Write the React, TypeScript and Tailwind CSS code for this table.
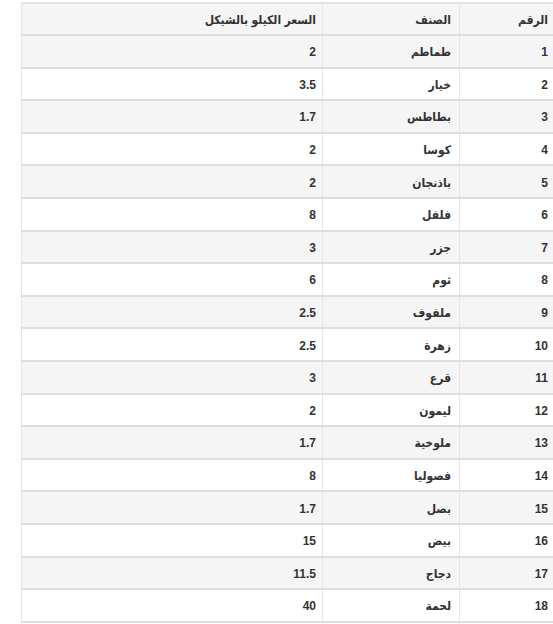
import React from "react";

const rows: [number, string, string][] = [
  [1, "طماطم", "2"],
  [2, "خيار", "3.5"],
  [3, "بطاطس", "1.7"],
  [4, "كوسا", "2"],
  [5, "باذنجان", "2"],
  [6, "فلفل", "8"],
  [7, "جزر", "3"],
  [8, "ثوم", "6"],
  [9, "ملفوف", "2.5"],
  [10, "زهرة", "2.5"],
  [11, "قرع", "3"],
  [12, "ليمون", "2"],
  [13, "ملوخية", "1.7"],
  [14, "فصوليا", "8"],
  [15, "بصل", "1.7"],
  [16, "بيض", "15"],
  [17, "دجاج", "11.5"],
  [18, "لحمة", "40"],
];

export default function App() {
  return (
    <div className="w-[553px] h-[624px] overflow-hidden bg-white pl-[21px] pt-[2px]" style={{ fontFamily: '"Liberation Sans", "DejaVu Sans Condensed", "DejaVu Sans", sans-serif' }}>
      <table dir="rtl" className="w-[535px] table-fixed border-collapse text-[12px] font-bold text-[#333]">
        <colgroup>
          <col className="w-[97px]" />
          <col className="w-[137px]" />
          <col className="w-[301px]" />
        </colgroup>
        <thead>
          <tr className="bg-[#f5f5f5] h-[32px]">
            <th className="border-x border-x-[#e6e6e6] border-t-2 border-t-[#e3e3e3] border-b-2 border-b-[#dedede] px-[8px] pt-[2px] text-right align-middle">الرقم</th>
            <th className="border-x border-x-[#e6e6e6] border-t-2 border-t-[#e3e3e3] border-b-2 border-b-[#dedede] px-[8px] pt-[2px] text-right align-middle">الصنف</th>
            <th className="border-x border-x-[#e6e6e6] border-t-2 border-t-[#e3e3e3] border-b-2 border-b-[#dedede] px-[6px] pt-[2px] text-right align-middle">السعر الكيلو بالشيكل</th>
          </tr>
        </thead>
        <tbody>
          {rows.map(([n, name, price], i) => (
            <tr key={n} className={i % 2 === 0 ? "bg-[#f5f5f5] h-[32.6px]" : "bg-white h-[32.6px]"}>
              <td className="border-x border-x-[#e6e6e6] border-b-2 border-b-[#dedede] px-[8px] pt-[2px] text-right align-middle">{n}</td>
              <td className="border-x border-x-[#e6e6e6] border-b-2 border-b-[#dedede] px-[8px] pt-[2px] text-right align-middle">{name}</td>
              <td className="border-x border-x-[#e6e6e6] border-b-2 border-b-[#dedede] px-[6px] pt-[2px] text-right align-middle">{price}</td>
            </tr>
          ))}
        </tbody>
      </table>
    </div>
  );
}
